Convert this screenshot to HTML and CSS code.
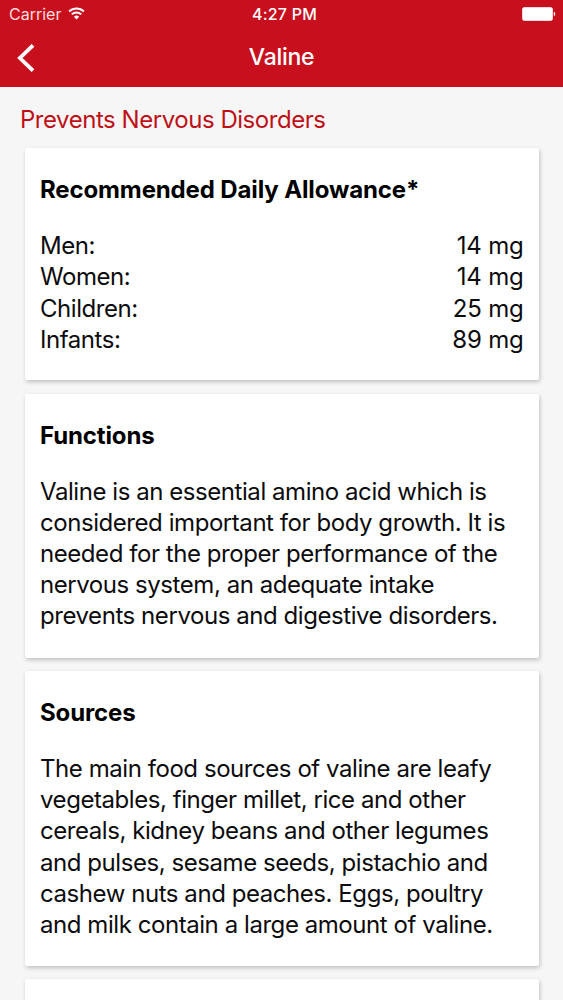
FILE: index.html
```html
<!DOCTYPE html>
<html lang="en">
<head>
  <meta charset="UTF-8" />
  <meta name="viewport" content="width=device-width, initial-scale=1" />
  <title>Valine</title>
  <link rel="stylesheet" href="styles.css">
</head>
<body>
  <header class="top">
    <div class="status-bar">
      <div class="carrier">
        <span>Carrier</span>
        <svg class="wifi" viewBox="0 0 18 13" width="17" height="13">
          <path d="M1.2 4.4a11.2 11.2 0 0 1 15.6 0M4 7.5a7.2 7.2 0 0 1 10 0" fill="none" stroke="#fff" stroke-width="2" />
          <path d="M9 12.8L6.2 9.9a4 4 0 0 1 5.6 0z" fill="#fff" />
        </svg>
      </div>
      <div class="time">4:27 PM</div>
      <div class="power">
        <svg viewBox="0 0 34 14" width="34" height="14">
          <rect x="0.5" y="0.5" width="30" height="13" rx="1.8" fill="#fff" stroke="#fff" stroke-opacity="0.65" />
          <path d="M31.8 4.8c1.9.5 1.9 3.9 0 4.4z" fill="#fff" />
        </svg>
      </div>
    </div>
    <div class="nav-bar">
      <a class="back" href="#" aria-label="Back">
        <svg viewBox="0 0 18 28" width="18" height="28">
          <path d="M16 1.3L2.9 14 16 26.7" fill="none" stroke="#fff" stroke-width="3.8" />
        </svg>
      </a>
      <h1>Valine</h1>
    </div>
  </header>

  <main>
    <h2 class="tagline">Prevents Nervous Disorders</h2>

    <section class="card">
      <h3>Recommended Daily Allowance*</h3>
      <dl class="allowance">
        <div><dt>Men:</dt><dd>14 mg</dd></div>
        <div><dt>Women:</dt><dd>14 mg</dd></div>
        <div><dt>Children:</dt><dd>25 mg</dd></div>
        <div><dt>Infants:</dt><dd>89 mg</dd></div>
      </dl>
    </section>

    <section class="card functions">
      <h3>Functions</h3>
      <p>Valine is an essential amino acid which is<br>
        considered important for body growth. It is<br>
        needed for the proper performance of the<br>
        nervous system, an adequate intake<br>
        prevents nervous and digestive disorders.</p>
    </section>

    <section class="card sources">
      <h3>Sources</h3>
      <p>The main food sources of valine are leafy<br>
        vegetables, finger millet, rice and other<br>
        cereals, kidney beans and other legumes<br>
        and pulses, sesame seeds, pistachio and<br>
        cashew nuts and peaches. Eggs, poultry<br>
        and milk contain a large amount of valine.</p>
    </section>

    <section class="card next"></section>
  </main>
</body>
</html>
```
FILE: styles.css
```css
* {
  box-sizing: border-box;
  margin: 0;
  padding: 0;
}
body {
  display: flex;
  flex-direction: column;
  height: 100vh;
  overflow: hidden;
  background: #f6f6f7;
  color: #0c0c0e;
  font-family: Inter, "Liberation Sans", sans-serif;
  font-size: 24px;
  line-height: 31.2px;
  letter-spacing: -0.44px;
}

/* Header */
.top {
  flex: none;
  height: 87px;
  background: #c80f1e;
  color: #fff;
}
.status-bar {
  display: grid;
  grid-template-columns: 1fr auto 1fr;
  align-items: center;
  height: 28px;
  padding: 0 7px 0 9px;
  font-size: 16px;
  line-height: 20px;
  letter-spacing: 0;
}
.carrier {
  display: flex;
  align-items: center;
  gap: 7px;
  color: #fbdcdc;
}
.wifi {
  margin-top: -1px;
}
.time {
  padding-left: 4px;
  font-weight: 500;
  letter-spacing: 0.2px;
}
.power {
  display: flex;
  justify-content: flex-end;
}
.nav-bar {
  display: grid;
  grid-template-columns: 1fr auto 1fr;
  align-items: center;
  height: 59px;
  padding: 0 17px;
}
.back svg {
  display: block;
}
.nav-bar h1 {
  font-size: 23px;
  font-weight: 500;
  letter-spacing: -0.3px;
}

/* Content */
main {
  display: flex;
  flex: 1;
  flex-direction: column;
  min-height: 0;
}
.tagline {
  padding: 17px 20px 13px;
  color: #be1018;
  font-size: 24px;
  font-weight: 400;
  letter-spacing: -0.46px;
}
.card {
  flex: none;
  height: 232px;
  margin: 0 24.5px 13.4px;
  padding: 26px 15px 0 15.5px;
  background: #fff;
  border-radius: 2px;
  box-shadow: 1px 2px 4px rgba(0, 0, 0, 0.22);
}
.card h3 {
  margin-bottom: 24.8px;
  color: #000;
  font-size: 24px;
  font-weight: 700;
  letter-spacing: -0.13px;
}
.card p {
  white-space: nowrap;
}
.functions {
  height: 264px;
}
.sources {
  height: 294.6px;
}
.next {
  flex: 1;
  height: auto;
  margin-bottom: 0;
  border-radius: 2px 2px 0 0;
}
.allowance div {
  display: flex;
  justify-content: space-between;
}
.allowance dd {
  letter-spacing: -0.2px;
}
```
